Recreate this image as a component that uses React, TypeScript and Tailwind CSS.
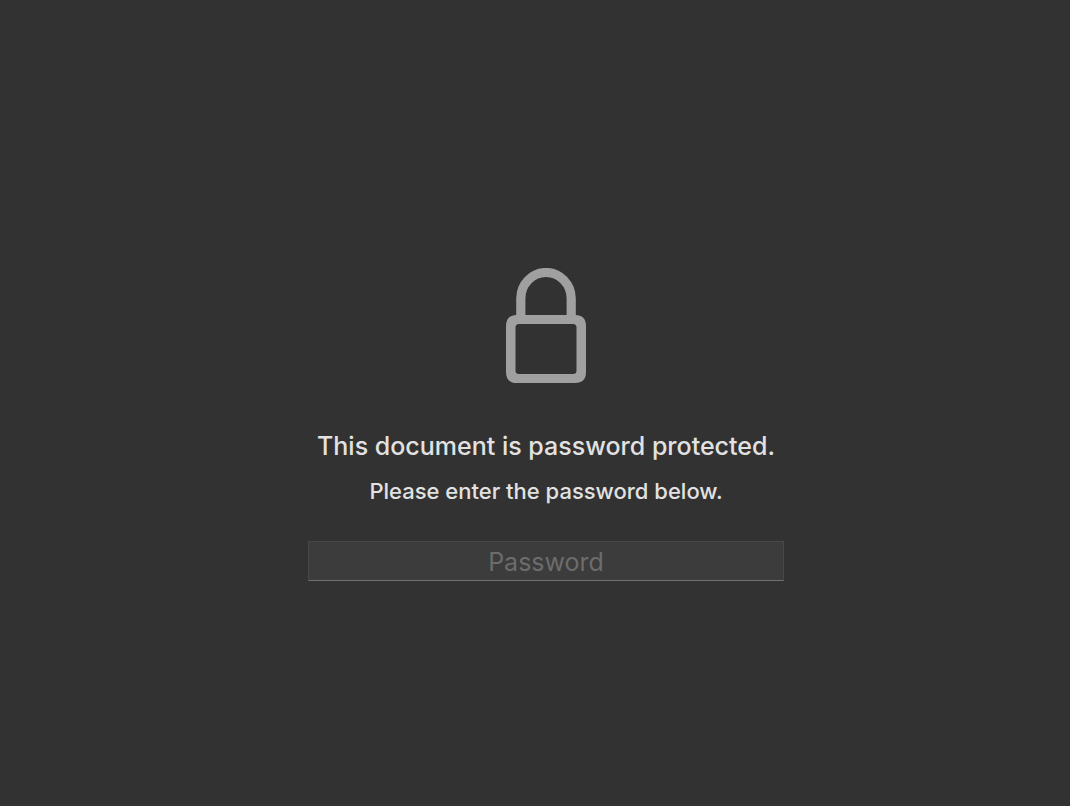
import React, { useState } from 'react';

const LockIcon: React.FC<{ className?: string }> = ({ className }) => (
  <svg viewBox="0 0 80 115" fill="none" className={className} aria-hidden="true">
    <path d="M14.8 50V30.5A25.2 26 0 0 1 65.2 30.5V50" stroke="currentColor" strokeWidth="9.2" />
    <path
      fillRule="evenodd"
      fill="currentColor"
      d="M11 47H69Q80 47 80 58V104Q80 115 69 115H11Q0 115 0 104V58Q0 47 11 47ZM13 56Q9.5 56 9.5 59.5V102.5Q9.5 106 13 106H67Q70.5 106 70.5 102.5V59.5Q70.5 56 67 56Z"
    />
  </svg>
);

export default function App() {
  const [password, setPassword] = useState('');

  return (
    <main className="flex min-h-screen flex-col items-center justify-center bg-[#323232] pt-[43px] pl-[22px] font-['Inter',sans-serif] text-[#e2e2e2]">
      <LockIcon className="h-[115px] w-20 text-[#a0a0a0]" />
      <h1 className="mt-[45px] text-[25px] leading-9 font-medium">This document is password protected.</h1>
      <p className="mt-[11px] text-[22px] leading-8 font-medium">Please enter the password below.</p>
      <form className="mt-[34px] w-full max-w-[476px]" onSubmit={(e) => e.preventDefault()}>
        <input
          type="password"
          aria-label="Password"
          placeholder="Password"
          value={password}
          onChange={(e) => setPassword(e.target.value)}
          className="block h-10 w-full border border-[#484848] border-b-[#707070] bg-[#3c3c3c] px-2 pt-0.5 text-center text-[25px] leading-9 outline-none placeholder:text-[#6c6c6c]"
        />
      </form>
    </main>
  );
}
